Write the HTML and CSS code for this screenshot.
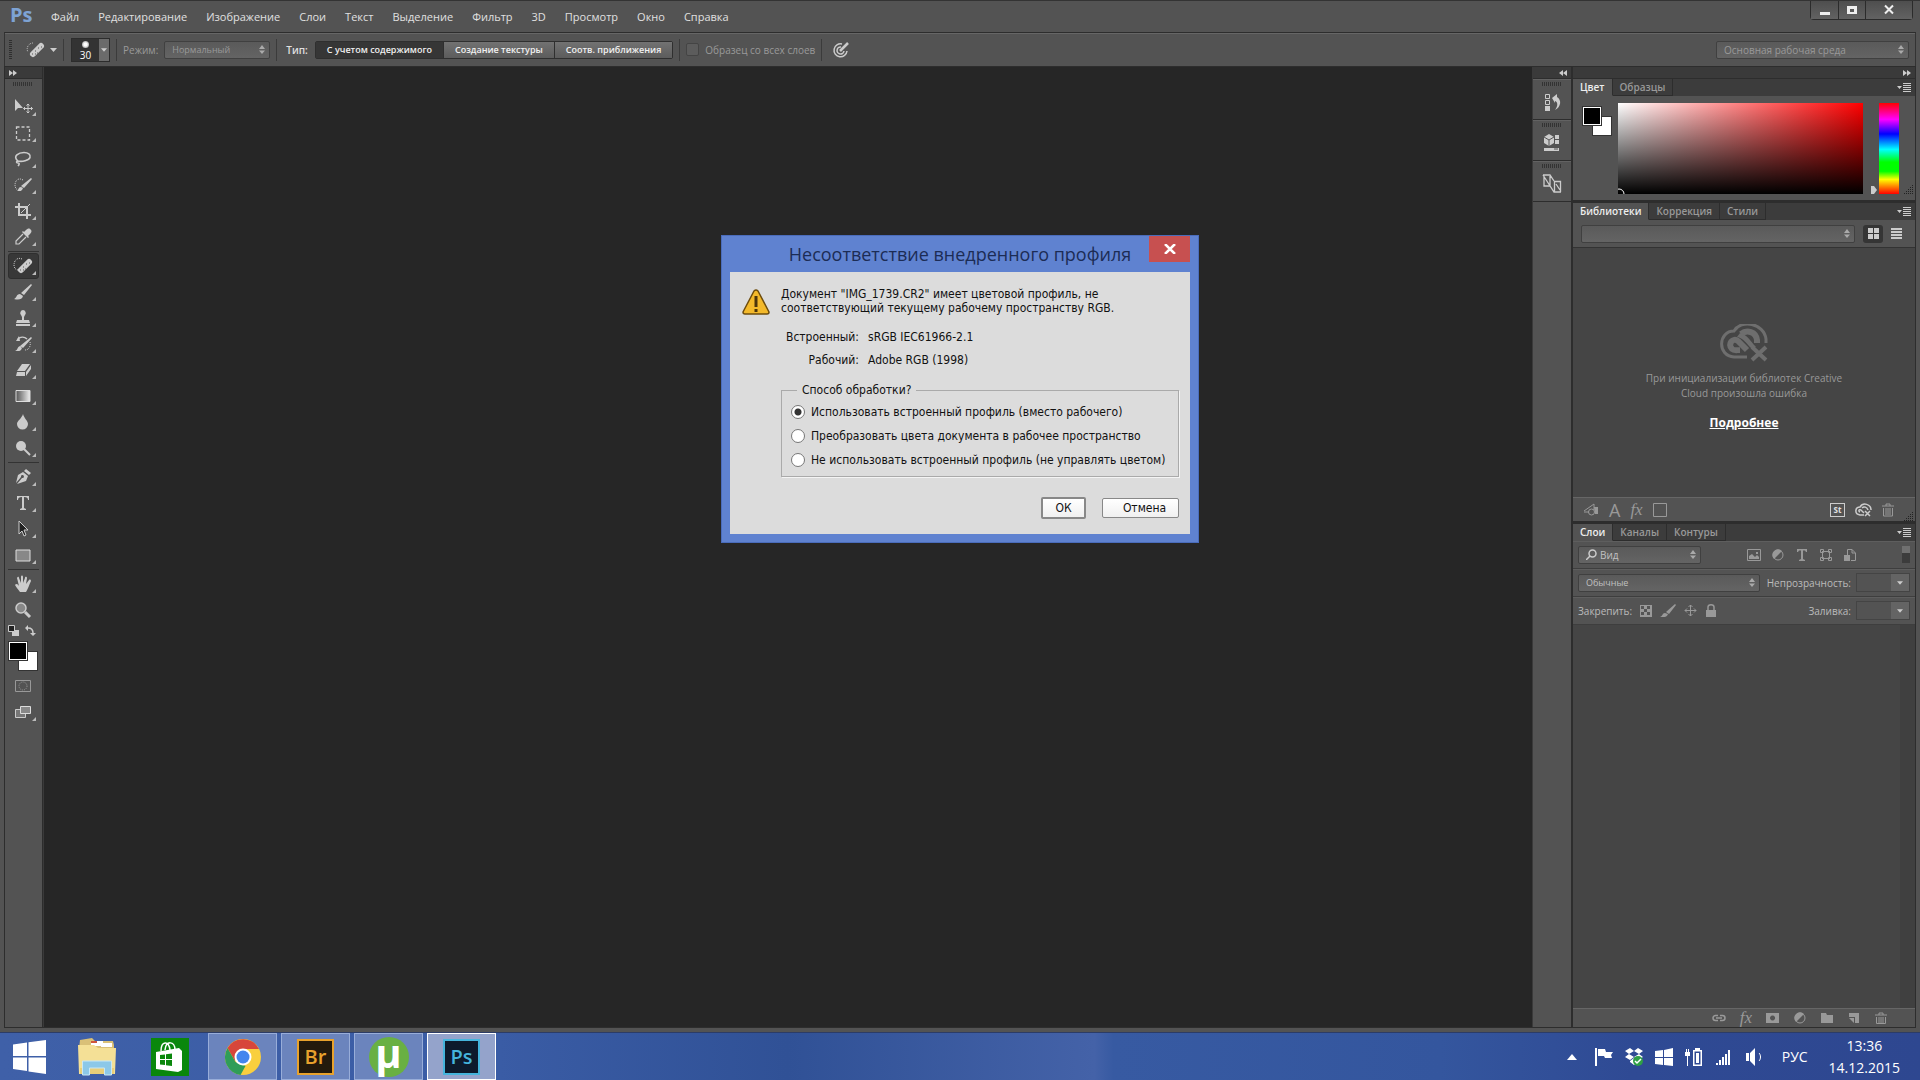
FILE: index.html
```html
<!DOCTYPE html>
<html lang="ru">

<head>
  <meta charset="UTF-8">
  <meta name="viewport" content="width=device-width, initial-scale=1.0">
  <title>Photoshop</title>
  <link rel="stylesheet" href="styles.css">
</head>

<body>
  <div class="app">
    <header class="menubar">
      <span class="logo">Ps</span>
      <nav class="menu">
        <a href="#">Файл</a>
        <a href="#">Редактирование</a>
        <a href="#">Изображение</a>
        <a href="#">Слои</a>
        <a href="#">Текст</a>
        <a href="#">Выделение</a>
        <a href="#">Фильтр</a>
        <a href="#">3D</a>
        <a href="#">Просмотр</a>
        <a href="#">Окно</a>
        <a href="#">Справка</a>
      </nav>
      <div class="window-buttons">
        <button type="button" aria-label="Свернуть"><svg width="12" height="12" viewBox="0 0 12 12"><path d="M1 8h10v3H1z"/></svg></button>
        <button type="button" aria-label="Развернуть"><svg width="12" height="12" viewBox="0 0 12 12"><path fill-rule="evenodd" d="M1 2h10v8H1zM4 5v3h4V5z"/></svg></button>
        <button type="button" class="wide" aria-label="Закрыть"><svg width="12" height="12" viewBox="0 0 12 12"><path class="line" stroke-width="2" d="M2 1.500l8 8M10 1.500l-8 8"/></svg></button>
      </div>
    </header>

    <div class="options">
      <span class="grip-v"></span>
      <button type="button" class="tool-preset" aria-label="Точечная восстанавливающая кисть">
        <svg width="22" height="20" viewBox="0 0 22 20"><path class="line dots" d="M9 3a6 6 0 0 0-5 9"/><path class="line" stroke-width="6" stroke-linecap="round" d="M9 14l8-8"/><path class="holes" d="M8 14h1M11 11h1M13 13h1M14 8h1M17 7h1M11 14h1"/></svg>
        <svg width="7" height="4" viewBox="0 0 7 4"><path d="M0 0h7L3.500 4z"/></svg>
      </button>
      <span class="divider"></span>
      <button type="button" class="brush-size">
        <span class="brush-preview"><span class="brush-dot"></span>30</span>
        <span class="brush-arrow"><svg width="6" height="4" viewBox="0 0 7 4"><path d="M0 0h7L3.500 4z"/></svg></span>
      </button>
      <span class="divider"></span>
      <label for="mode" class="dim">Режим:</label>
      <span class="select mode">
        <select id="mode" class="dim"><option>Нормальный</option></select>
        <svg width="6" height="9" viewBox="0 0 6 9"><path d="M0 4l3-4 3 4zM0 5.500h6L3 9z"/></svg>
      </span>
      <span class="divider"></span>
      <span class="type-label">Тип:</span>
      <div class="segmented">
        <button type="button" class="active">С учетом содержимого</button>
        <button type="button">Создание текстуры</button>
        <button type="button">Соотв. приближения</button>
      </div>
      <span class="divider"></span>
      <label class="check dim"><input type="checkbox" disabled>Образец со всех слоев</label>
      <span class="divider"></span>
      <button type="button" class="plain pressure" aria-label="Нажим пера">
        <svg width="18" height="18" viewBox="0 0 18 18"><path class="line" stroke-width="1.500" d="M10 3a6.500 6.500 0 1 0 5 7M9 6a3.500 3.500 0 1 0 3 4"/><path class="line" stroke-width="2.500" d="M8 10l8-8"/></svg>
      </button>
      <span class="select workspace">
        <select class="dim" aria-label="Рабочая среда"><option>Основная рабочая среда</option></select>
        <svg width="6" height="9" viewBox="0 0 6 9"><path d="M0 4l3-4 3 4zM0 5.500h6L3 9z"/></svg>
      </span>
    </div>

    <main class="work">
      <aside class="toolbox">
        <div class="dock-head"><svg width="8" height="6" viewBox="0 0 8 6"><path d="M0 0l4 3-4 3zM4 0l4 3-4 3z"/></svg></div>
        <span class="grip-h"></span>
        <button type="button" class="tool" aria-label="Перемещение"><svg class="icon" viewBox="0 0 20 20"><path d="M2 2v12l3-3h5z"/><path class="line" d="M15 7v9M10.500 11.500h9M13.500 8.500L15 7l1.500 1.500M13.500 14.500L15 16l1.500-1.500M12 10l-1.500 1.500L12 13M18 10l1.500 1.500L18 13"/></svg></button>
        <button type="button" class="tool" aria-label="Прямоугольная область"><svg class="icon" viewBox="0 0 20 20"><path class="line" stroke-width="1.300" stroke-dasharray="3 2" d="M3.500 4h13v13h-13z"/></svg></button>
        <button type="button" class="tool" aria-label="Лассо"><svg class="icon" viewBox="0 0 20 20"><path class="line" stroke-width="1.600" d="M5 12C-1 7 6 3.500 11 3.500c4 0 7 2 6 5S9 13 5 12c-2 0-2 2 0 2s1 2 0 3"/></svg></button>
        <button type="button" class="tool" aria-label="Быстрое выделение"><svg class="icon" viewBox="0 0 20 20"><path class="line dots" d="M10 5C5 2 2 6 2 10s3 6 6 5"/><path d="M18 3l1 1-8 9-3-2zM10 13c-1 4-4 3-6 3 2-1 1-4 4-4z"/></svg></button>
        <button type="button" class="tool" aria-label="Рамка"><svg class="icon" viewBox="0 0 20 20"><path class="line" stroke-width="2" d="M6 2v12h12M2 6h12v12"/><path class="line" d="M8 12l9-9"/></svg></button>
        <button type="button" class="tool" aria-label="Пипетка"><svg class="icon" viewBox="0 0 20 20"><path d="M17 2c2 1 2 3 0 5l-2 2 1 1-1 1-6-6 1-1 1 1 2-2c1-1 3-2 4-1z"/><path class="line" stroke-width="1.200" d="M10 7l-7 7v3h3l7-7"/></svg></button>
        <span class="tool-line"></span>
        <button type="button" class="tool active" aria-label="Точечная восстанавливающая кисть"><svg class="icon" viewBox="0 0 20 20"><path class="line dots" d="M9 3C5 1 1 4 1 9c0 3 2 5 4 5"/><path class="line" stroke-width="6" stroke-linecap="round" d="M8 14l8-8"/><path class="holes" d="M7 14h1M10 11h1M12 13h1M13 8h1M16 7h1M10 14h1"/></svg></button>
        <button type="button" class="tool" aria-label="Кисть"><svg class="icon" viewBox="0 0 20 20"><path d="M18 2l1 1-8 10-3-2zM10 14c-1 4-5 4-9 3 3-1 2-5 6-5z"/></svg></button>
        <button type="button" class="tool" aria-label="Штамп"><svg class="icon" viewBox="0 0 20 20"><path d="M10 2a3 3 0 0 1 2 5l-1 2v3h5l1 3H3l1-3h5V9L8 7a3 3 0 0 1 2-5zM3 16h14v2H3z"/></svg></button>
        <button type="button" class="tool" aria-label="Архивная кисть"><svg class="icon" viewBox="0 0 20 20"><path d="M18 3l1 1-9 10-3-2zM9 14c-1 4-4 3-7 3 3-1 2-4 5-5zM3 7l3-5 1 5z"/><path class="line" stroke-width="1.400" d="M5 5c2-2 6-3 9 0"/><path class="line dots" d="M17 8c1 4-1 8-5 8"/></svg></button>
        <button type="button" class="tool" aria-label="Ластик"><svg class="icon" viewBox="0 0 20 20"><path d="M9 4h8l-5 7H4zM4 12h8v4H3zM13 12l5-7v4l-5 7z"/></svg></button>
        <button type="button" class="tool" aria-label="Градиент"><svg class="icon" viewBox="0 0 20 20"><defs><linearGradient id="grad"><stop offset="0" stop-color="#555"/><stop offset="1" stop-color="#eee"/></linearGradient></defs><path fill="url(#grad)" stroke="#ddd" d="M3 4.500h14v11H3z"/></svg></button>
        <button type="button" class="tool" aria-label="Размытие"><svg class="icon" viewBox="0 0 20 20"><path d="M10 2c1 4 5 7 5 10a5 5 0 0 1-11 0c0-3 5-6 6-10z"/></svg></button>
        <button type="button" class="tool" aria-label="Осветлитель"><svg class="icon" viewBox="0 0 20 20"><circle cx="8" cy="8" r="5"/><path class="line" stroke-width="2" d="M11 11l6 6"/></svg></button>
        <span class="tool-line"></span>
        <button type="button" class="tool" aria-label="Перо"><svg class="icon" viewBox="0 0 20 20"><path d="M13 2l5 4-2 2-5-4zM10 5l5 4-2 5-9 3 5-6a1.500 1.500 0 1 0-1-1l-5 6L5 8z"/></svg></button>
        <button type="button" class="tool" aria-label="Текст"><svg class="icon" viewBox="0 0 20 20"><path d="M4 3h12v4h-1c0-2-1-3-4-3v11l2 1v1H7v-1l2-1V4C6 4 5 5 5 7H4z"/></svg></button>
        <button type="button" class="tool" aria-label="Выделение контура"><svg class="icon" viewBox="0 0 20 20"><path fill="#222" stroke="#ccc" d="M6 2v13l3-3 2 5 2-1-2-5h4z"/></svg></button>
        <button type="button" class="tool" aria-label="Прямоугольник"><svg class="icon" viewBox="0 0 20 20"><path fill="#888" stroke="#ddd" d="M3 5h14v11H3z"/></svg></button>
        <span class="tool-line"></span>
        <button type="button" class="tool" aria-label="Рука"><svg class="icon" viewBox="0 0 20 20"><path d="M7 18c-2-3-4-5-5-7 1-2 3-1 4 1L4 4c1-2 2-1 2 0l2 5V3c0-2 2-2 2 0v6l2-5c0-2 2-1 2 0l-1 6 3-4c1-1 2 0 2 1-2 4-3 8-5 11z"/></svg></button>
        <button type="button" class="tool no-more" aria-label="Масштаб"><svg class="icon" viewBox="0 0 20 20"><circle cx="8" cy="8" r="5" fill="#888" stroke="#ccc" stroke-width="1.500"/><path class="line" stroke-width="3" d="M12 12l5 5"/></svg></button>
        <div class="swap">
          <button type="button" class="plain" aria-label="Цвета по умолчанию"><svg width="11" height="11" viewBox="0 0 11 11"><path d="M5 5h6v6H4V7h1z"/><path fill="#222" stroke="#ccc" d="M.5.500h6v6h-6z"/></svg></button>
          <button type="button" class="plain" aria-label="Поменять цвета"><svg width="11" height="11" viewBox="0 0 11 11"><path d="M0 3l3-3v6zM5 8h6l-3 3z"/><path class="line" stroke-width="1.500" d="M3 3c3 0 5 1 5 5"/></svg></button>
        </div>
        <div class="swatches"><span class="back"></span><span class="front"></span></div>
        <button type="button" class="tool no-more" aria-label="Быстрая маска"><svg class="icon" viewBox="0 0 20 20"><path class="line faint" d="M2.500 4.500h15v11h-15z"/><circle class="line faint" stroke-dasharray="1 1" cx="10" cy="10" r="4"/></svg></button>
        <button type="button" class="tool" aria-label="Режим экрана"><svg class="icon" viewBox="0 0 20 20"><path fill="#777" stroke="#ccc" d="M2.500 7.500h10v8h-10z"/><path fill="#888" stroke="#ddd" d="M7.500 4.500h10v7h-10z"/></svg></button>
      </aside>

      <section class="canvas"></section>

      <aside class="mini-dock">
        <div class="dock-head right"><svg width="8" height="6" viewBox="0 0 8 6"><path d="M4 0L0 3l4 3zM8 0L4 3l4 3z"/></svg></div>
        <button type="button" class="dock-cell" aria-label="История"><span class="grip-h"></span><svg width="20" height="20" viewBox="0 0 20 20"><path class="line" d="M3.500 2.500h4v4h-4zM3.500 8.500h4v4h-4z"/><path d="M3 14h5v5H3zM10 6l5-4v3c5 3 4 10-2 13 3-4 3-8 0-9v2z"/></svg></button>
        <button type="button" class="dock-cell" aria-label="Свойства"><span class="grip-h"></span><svg width="20" height="20" viewBox="0 0 20 20"><path d="M7 1l5 3v6l-5 3-5-3V4zM13 2h4v4h-4zM13 7h4v4h-4zM2 15h15v3H2z"/><path class="cut" d="M2 4l5 3 5-3M7 7v6M12 16h4"/></svg></button>
        <button type="button" class="dock-cell" aria-label="Инструменты"><span class="grip-h"></span><svg width="20" height="20" viewBox="0 0 20 20"><path class="line" stroke-width="1.300" d="M1 1h7l4 6M1 1l11 17h7M2 3v9h6V2M12.500 18V7.500h6V18M14 10l4 6"/></svg></button>
      </aside>

      <aside class="panels">
        <div class="dock-head right"><svg width="8" height="6" viewBox="0 0 8 6"><path d="M0 0l4 3-4 3zM4 0l4 3-4 3z"/></svg></div>

        <section class="panel">
          <div class="tabs">
            <button type="button" class="active">Цвет</button>
            <button type="button">Образцы</button>
            <button type="button" class="panel-menu" aria-label="Меню"><svg width="14" height="9" viewBox="0 0 14 9"><path d="M0 3h5L2.500 6zM6 0h8v1H6zM6 2h8v1H6zM6 4h8v1H6zM6 6h8v1H6zM6 8h8v1H6z"/></svg></button>
          </div>
          <div class="color-body">
            <div class="swatches"><span class="back"></span><span class="front"></span></div>
            <svg class="color-field" height="91" aria-label="Поле цвета">
              <defs>
                <linearGradient id="tone"><stop offset="0" stop-color="#fff"/><stop offset="1" stop-color="#f00"/></linearGradient>
                <linearGradient id="shade" x2="0" y2="1"><stop offset="0" stop-color="#000" stop-opacity="0"/><stop offset="1" stop-color="#000"/></linearGradient>
              </defs>
              <rect width="100%" height="100%" fill="url(#tone)"/>
              <rect width="100%" height="100%" fill="url(#shade)"/>
              <circle cx="1" cy="91" r="5" fill="none" stroke="#fff"/>
            </svg>
            <svg class="hue-mark" width="6" height="8" viewBox="0 0 6 8"><path d="M0 0h3l3 4-3 4H0z"/></svg>
            <div class="hue"></div>
            <svg class="resize" width="10" height="10" viewBox="0 0 10 10"><path d="M0 9.500h10M2 7.500h8M4 5.500h6M6 3.500h4M8 1.500h2"/></svg>
          </div>
        </section>

        <section class="panel">
          <div class="tabs">
            <button type="button" class="active">Библиотеки</button>
            <button type="button">Коррекция</button>
            <button type="button">Стили</button>
            <button type="button" class="panel-menu" aria-label="Меню"><svg width="14" height="9" viewBox="0 0 14 9"><path d="M0 3h5L2.500 6zM6 0h8v1H6zM6 2h8v1H6zM6 4h8v1H6zM6 6h8v1H6zM6 8h8v1H6z"/></svg></button>
          </div>
          <div class="lib-bar">
            <span class="select grow">
              <select aria-label="Библиотека"><option></option></select>
              <svg width="6" height="9" viewBox="0 0 6 9"><path d="M0 4l3-4 3 4zM0 5.500h6L3 9z"/></svg>
            </span>
            <button type="button" class="view active" aria-label="Сетка"><svg width="11" height="11" viewBox="0 0 11 11"><path d="M0 0h5v5H0zM6 0h5v5H6zM0 6h5v5H0zM6 6h5v5H6z"/></svg></button>
            <button type="button" class="view" aria-label="Список"><svg width="11" height="11" viewBox="0 0 11 11"><path d="M0 0h11v2H0zM0 3h11v2H0zM0 6h11v2H0zM0 9h11v2H0z"/></svg></button>
          </div>
          <div class="lib-body">
            <svg width="48" height="38" viewBox="0 0 48 38"><path d="M27 33H14C-3 32-2 7 14 7 21-5 44-1 46 15v4" fill="none" stroke="#6e6e6e" stroke-width="3"/><path d="M27 26l-9-9c-5-4-11 3-6 8 2 2 5 1 8 1M21 10c6-5 15-2 16 6v3" fill="none" stroke="#6e6e6e" stroke-width="6"/><path d="M20 9c8 2 10 8 16 14l-5 1c-5-5-8-10-14-11z" fill="#6e6e6e"/><path d="M32 23l14 13M46 23L32 36" fill="none" stroke="#6e6e6e" stroke-width="4"/></svg>
            <p>При инициализации библиотек Creative Cloud произошла ошибка</p>
            <a href="#">Подробнее</a>
          </div>
          <div class="lib-foot">
            <button type="button" class="plain" aria-label="Графика"><svg width="16" height="14" viewBox="0 0 16 14"><path class="line faint" d="M1 8l10-7v6M1 9h5"/><circle class="line faint" cx="8.500" cy="9" r="3"/><path class="gray" d="M11 4h4v7h-3z"/></svg></button>
            <button type="button" class="plain big-a">A</button>
            <button type="button" class="plain fx">fx</button>
            <button type="button" class="plain" aria-label="Цвет"><svg width="14" height="14" viewBox="0 0 14 14"><path class="line faint" d="M.5.500h13v13H.5z"/></svg></button>
            <span class="spring"></span>
            <button type="button" class="stock">St</button>
            <button type="button" class="plain" aria-label="Creative Cloud"><svg width="17" height="14" viewBox="0 0 17 14"><path class="line" stroke-width="1.500" d="M9 12H5C-1 11 0 4 5 4c3-5 11-3 11 3M5 9c-2-1-1-3 1-2l3 3M7 5c2-2 5-1 6 2"/><path class="line" stroke-width="1.500" d="M10 8l5 5M15 8l-5 5"/></svg></button>
            <button type="button" class="plain" aria-label="Удалить"><svg width="12" height="14" viewBox="0 0 12 14"><path class="line faint" d="M0 3h12M4 3V1h4v2M1.500 5v8h9V5M4 5v7M6 5v7M8 5v7"/></svg></button>
            <svg class="resize" width="10" height="10" viewBox="0 0 10 10"><path d="M0 9.500h10M2 7.500h8M4 5.500h6M6 3.500h4M8 1.500h2"/></svg>
          </div>
        </section>

        <section class="panel layers">
          <div class="tabs">
            <button type="button" class="active">Слои</button>
            <button type="button">Каналы</button>
            <button type="button">Контуры</button>
            <button type="button" class="panel-menu" aria-label="Меню"><svg width="14" height="9" viewBox="0 0 14 9"><path d="M0 3h5L2.500 6zM6 0h8v1H6zM6 2h8v1H6zM6 4h8v1H6zM6 6h8v1H6zM6 8h8v1H6z"/></svg></button>
          </div>
          <div class="layer-row">
            <span class="select kind">
              <svg class="search" width="11" height="11" viewBox="0 0 11 11"><circle class="line" stroke-width="1.500" cx="6.500" cy="4.500" r="3.500"/><path class="line" stroke-width="1.500" d="M4 7l-4 4"/></svg>
              <select aria-label="Тип фильтра"><option>Вид</option></select>
              <svg width="6" height="9" viewBox="0 0 6 9"><path d="M0 4l3-4 3 4zM0 5.500h6L3 9z"/></svg>
            </span>
            <div class="filters">
              <button type="button" class="plain" aria-label="Пиксели"><svg width="14" height="12" viewBox="0 0 14 12"><path class="line faint" d="M.5.500h13v11H.5z"/><path class="gray" d="M2 10V7l3-2 3 3 2-2 2 2v2zM9 3h2v2H9z"/></svg></button>
              <button type="button" class="plain" aria-label="Коррекция"><svg width="14" height="12" viewBox="0 0 14 12"><circle class="line faint" cx="7" cy="6" r="5"/><path class="gray" d="M3 10A5.500 5.500 0 0 1 11 2z"/></svg></button>
              <button type="button" class="plain" aria-label="Текст"><svg width="14" height="12" viewBox="0 0 14 12"><path class="gray" d="M2 0h10v3h-1L10 1.500H8V10l2 1v1H4v-1l2-1V1.500H4L3 3H2z"/></svg></button>
              <button type="button" class="plain" aria-label="Фигура"><svg width="14" height="12" viewBox="0 0 14 12"><path class="line faint" d="M3.500 2v8M10.500 2v8M4 2.500h6M4 9.500h6M1.500.500h3v3h-3zM9.500.500h3v3h-3zM1.500 8.500h3v3h-3zM9.500 8.500h3v3h-3z"/></svg></button>
              <button type="button" class="plain" aria-label="Смарт-объект"><svg width="14" height="12" viewBox="0 0 14 12"><path class="line faint" d="M4.500 6V.5H9L12.500 4v7.500H8M9 .5V4h3"/><path class="gray" d="M1 6h6v6H1z"/></svg></button>
            </div>
            <button type="button" class="filter-switch" aria-label="Фильтрация"></button>
          </div>
          <div class="layer-row">
            <span class="select blend">
              <select aria-label="Режим наложения"><option>Обычные</option></select>
              <svg width="6" height="9" viewBox="0 0 6 9"><path d="M0 4l3-4 3 4zM0 5.500h6L3 9z"/></svg>
            </span>
            <label for="opacity">Непрозрачность:</label>
            <span class="amount"><input type="text" id="opacity"><button type="button" aria-label="Выбрать"><svg width="6" height="4" viewBox="0 0 7 4"><path d="M0 0h7L3.500 4z"/></svg></button></span>
          </div>
          <div class="layer-row">
            <span>Закрепить:</span>
            <div class="locks">
              <button type="button" class="plain" aria-label="Прозрачность"><svg width="12" height="12" viewBox="0 0 12 12"><path class="gray" d="M0 0h12v12H0z"/><path fill="#555" d="M1 1h3v3H1zM7 1h3v3H7zM4 4h3v3H4zM1 7h3v3H1zM7 7h3v3H7z"/></svg></button>
              <button type="button" class="plain" aria-label="Пиксели"><svg width="16" height="14" viewBox="0 0 16 14"><path class="gray" d="M15 0l1 1-7 9-3-2zM8 10c-1 4-5 3-8 3 3-1 2-4 5-4z"/></svg></button>
              <button type="button" class="plain" aria-label="Положение"><svg width="13" height="13" viewBox="0 0 13 13"><path class="line faint" d="M6.500 1v11M1 6.500h11M4.500 3l2-2 2 2M4.500 10l2 2 2-2M3 4.500l-2 2 2 2M10 4.500l2 2-2 2"/></svg></button>
              <button type="button" class="plain" aria-label="Закрепить все"><svg width="12" height="13" viewBox="0 0 12 13"><path class="gray" d="M1 6h10v7H1z"/><path class="line faint" stroke-width="1.500" d="M3 6V3c0-3 6-3 6 0v3"/></svg></button>
            </div>
            <span class="spring"></span>
            <label for="fill">Заливка:</label>
            <span class="amount"><input type="text" id="fill"><button type="button" aria-label="Выбрать"><svg width="6" height="4" viewBox="0 0 7 4"><path d="M0 0h7L3.500 4z"/></svg></button></span>
          </div>
          <div class="layer-list"></div>
          <div class="layer-foot">
            <button type="button" class="plain" aria-label="Связать слои"><svg width="14" height="12" viewBox="0 0 14 12"><path class="line faint" stroke-width="1.500" d="M6 3.500H3.500a2.500 2.500 0 0 0 0 5H6M8 3.500h2.500a2.500 2.500 0 0 1 0 5H8M4 6h6"/></svg></button>
            <button type="button" class="plain fx">fx</button>
            <button type="button" class="plain" aria-label="Маска"><svg width="14" height="12" viewBox="0 0 14 12"><path class="gray" fill-rule="evenodd" d="M0 1h13v10H0zM6.500 3.500a2.500 2.500 0 1 0 .1 0z"/></svg></button>
            <button type="button" class="plain" aria-label="Корректирующий слой"><svg width="14" height="12" viewBox="0 0 14 12"><circle class="line faint" cx="7" cy="6" r="5"/><path class="gray" d="M3 10A5.500 5.500 0 0 1 11 2z"/></svg></button>
            <button type="button" class="plain" aria-label="Группа"><svg width="14" height="12" viewBox="0 0 14 12"><path class="gray" d="M1 1h5l1 2h6v8H1z"/></svg></button>
            <button type="button" class="plain" aria-label="Новый слой"><svg width="14" height="12" viewBox="0 0 14 12"><path class="gray" d="M2 1h10v10H8V5H2zM2 6h5v5z"/></svg></button>
            <button type="button" class="plain" aria-label="Удалить"><svg width="14" height="12" viewBox="0 0 14 12"><path class="line faint" d="M1 3h12M5 3V1h4v2M2.500 5v6.500h9V5M5 5v6M7 5v6M9 5v6"/></svg></button>
          </div>
        </section>
      </aside>
    </main>
  </div>

  <footer class="taskbar">
    <button type="button" class="start" aria-label="Пуск"><svg width="33" height="34" viewBox="0 0 33 34"><path fill="#fff" d="M0 4.500l14-2V16H0zM15.500 2.300L33 0v16H15.500zM0 17.500h14V31l-14-2zM15.500 17.500H33V34l-17.500-2.500z"/></svg></button>
    <button type="button" class="task" aria-label="Проводник"><svg width="40" height="38" viewBox="0 0 40 38"><path fill="#d9c077" d="M3 2l12-2 3 3h18l1 4v4H2z"/><path fill="#fff" d="M14 3h12v5H14zM24 5h11v4H24z"/><path fill="#d0563c" d="M14 3h6v2h-6z"/><path fill="#f4e096" d="M1 7h16l4 3h18l-1 26H2z"/><path fill="#e9cf79" d="M3 30h34v6H3z"/><path fill="#8cc8e8" stroke="#c9e8f5" d="M5.500 23h29v14h-7V30h-15v7h-7z"/></svg></button>
    <button type="button" class="task" aria-label="Магазин"><svg width="38" height="38" viewBox="0 0 38 38"><path fill="#0a870c" d="M0 0h38v38H0z"/><path fill="none" stroke="#fff" stroke-width="1.500" d="M10 13c0-10 8-11 9-1M14 12c1-10 10-9 10 0"/><path fill="#fff" d="M5 14l23-4 3 3v19l-4 2-22-3z"/><path fill="#0a870c" d="M9 17l5-.5V21H9zM15 16.300l6-.8V21h-6zM9 22h5v5l-5-.5zM15 22h6v6l-6-.8z"/></svg></button>
    <button type="button" class="task running" aria-label="Chrome"><svg width="36" height="36" viewBox="0 0 36 36"><circle cx="18" cy="18" r="18" fill="#f9cf3e"/><path fill="#d7463b" d="M2.500 9A18 18 0 0 1 34 10H18l-8 12z"/><path fill="#2f9d58" d="M2.500 9l8 14 10 4-5 9A18 18 0 0 1 2.500 9z"/><circle cx="18" cy="18" r="8.500" fill="#fff"/><circle cx="18" cy="18" r="6.500" fill="#4486ee"/></svg></button>
    <button type="button" class="task running"><span class="adobe bridge">Br</span></button>
    <button type="button" class="task running" aria-label="uTorrent"><span class="torrent">µ</span></button>
    <button type="button" class="task running front-task"><span class="adobe photoshop">Ps</span></button>

    <div class="tray">
      <button type="button" class="plain more" aria-label="Значки"><svg width="10" height="6" viewBox="0 0 10 6"><path d="M0 6l5-6 5 6z"/></svg></button>
      <button type="button" class="plain" aria-label="Центр поддержки"><svg width="20" height="20" viewBox="0 0 20 20"><path d="M1 1h2v18H1zM4 2h7l1 3h7l-2 3 1 3h-7l-1-2H4z"/></svg></button>
      <button type="button" class="plain" aria-label="Dropbox"><svg width="20" height="20" viewBox="0 0 20 20"><path d="M1 4l5-3 4 3-5 3zM10 4l4-3 5 3-4 3zM1 10l4-3 5 3-4 3zM10 10l5-3 4 3-5 3zM6 14l4-3 4 3v1l-4 3-4-3z"/><circle cx="14" cy="14" r="5" fill="#2f9f45"/><path class="line" stroke-width="1.500" d="M11 14l2 2 4-4"/></svg></button>
      <button type="button" class="plain" aria-label="Windows"><svg width="20" height="20" viewBox="0 0 20 20"><path d="M1 4l8-1v7H1zM10 3l9-2v9h-9zM1 11h8v7l-8-1zM10 11h9v8l-9-1z"/></svg></button>
      <button type="button" class="plain" aria-label="Батарея"><svg width="20" height="20" viewBox="0 0 20 20"><path fill-rule="evenodd" d="M11 1h5v2h2v16H9V3h2zM10.500 4.500v13h6v-13z"/><path d="M12 6h3v10h-3zM2 2h1v3h1V2h1v3h1v4H4v10H3V9H1V5h1z"/></svg></button>
      <button type="button" class="plain" aria-label="Сеть"><svg width="20" height="20" viewBox="0 0 20 20"><path d="M2 16h2v2H2zM5 13h2v5H5zM8 10h2v8H8zM11 7h2v11h-2zM14 3h2v15h-2z"/></svg></button>
      <button type="button" class="plain" aria-label="Громкость"><svg width="20" height="20" viewBox="0 0 20 20"><path d="M2 6h3v8H2zM6 6l5-5v18l-5-5z"/><path class="line" d="M15 6c2 2 2 6 0 8"/></svg></button>
      <button type="button" class="plain lang">РУС</button>
      <button type="button" class="plain clock"><span>13:36</span><span>14.12.2015</span></button>
    </div>
  </footer>

  <div class="overlay">
    <form class="dialog">
      <div class="dialog-title">
        <h1>Несоответствие внедренного профиля</h1>
        <button type="button" class="dialog-close" aria-label="Закрыть"><svg width="12" height="10" viewBox="0 0 12 10"><path class="line" stroke-width="2.500" d="M1 0l10 10M11 0L1 10"/></svg></button>
      </div>
      <div class="dialog-body">
        <svg class="warning" width="28" height="27" viewBox="0 0 28 27"><path fill="#f3b92b" stroke="#6d4c0c" stroke-width="1.500" stroke-linejoin="round" d="M12 2q2-2 4 0l11 21q0 2-2 2H3q-2 0-2-2z"/><path fill="#4c340b" d="M12.500 7h3v11h-3zM12.500 20h3v3h-3z"/></svg>
        <div class="dialog-content">
          <p>Документ "IMG_1739.CR2" имеет цветовой профиль, не соответствующий текущему рабочему пространству RGB.</p>
          <dl>
            <dt>Встроенный:</dt>
            <dd>sRGB IEC61966-2.1</dd>
            <dt>Рабочий:</dt>
            <dd>Adobe RGB (1998)</dd>
          </dl>
          <fieldset>
            <legend>Способ обработки?</legend>
            <label><input type="radio" name="profile" checked>Использовать встроенный профиль (вместо рабочего)</label>
            <label><input type="radio" name="profile">Преобразовать цвета документа в рабочее пространство</label>
            <label><input type="radio" name="profile">Не использовать встроенный профиль (не управлять цветом)</label>
          </fieldset>
          <div class="dialog-buttons">
            <button type="button" class="default">ОК</button>
            <button type="button" class="cancel">Отмена</button>
          </div>
        </div>
      </div>
    </form>
  </div>
</body>

</html>
```
FILE: styles.css
```css
* {
  box-sizing: border-box;
}

body {
  margin: 0;
  height: 100vh;
  display: flex;
  flex-direction: column;
  background-color: #535353;
  color: #e0e0e0;
  font-family: 'Open Sans', 'Noto Sans', sans-serif;
  font-size: 10px;
  overflow: hidden;
}

button, select, input {
  font: inherit;
  color: inherit;
  margin: 0;
  padding: 0;
  border: 0;
  background: none;
}

button {
  display: flex;
  align-items: center;
  justify-content: center;
}

a {
  color: inherit;
  text-decoration: none;
}

svg {
  display: block;
  flex: none;
  fill: #ccc;
}

.line {
  fill: none;
  stroke: #ccc;
}

.faint {
  stroke: #999;
}

.gray {
  fill: #999;
}

.dots {
  stroke-dasharray: 1 1;
}

.holes, .cut {
  fill: none;
  stroke: #555;
}

.dim {
  color: #999;
}

.spring {
  flex: 1;
}

/* window frame */
.app {
  flex: 1;
  min-height: 0;
  display: flex;
  flex-direction: column;
  padding: 0 4px 4px;
  border-top: 1px solid #333;
}

.menubar {
  display: flex;
  height: 31px;
  flex: none;
}

.logo {
  width: 47px;
  padding-left: 6px;
  color: #7ea3d4;
  font-size: 20px;
  font-weight: 700;
  line-height: 28px;
}

.menu {
  display: flex;
  gap: 19px;
  font-size: 11px;
  line-height: 32px;
}

.window-buttons {
  display: flex;
  align-self: flex-start;
  margin: 0 3px 0 auto;
  border: 1px solid #2b2b2b;
  border-top: 0;
  border-radius: 0 0 4px 4px;
}

.window-buttons button {
  width: 27px;
  height: 18px;
  background: linear-gradient(#4e4e4e, #626262);
}

.window-buttons button + button {
  border-left: 1px solid #2b2b2b;
}

.window-buttons .wide {
  width: 47px;
}

.window-buttons svg {
  fill: #eee;
}

.window-buttons .line {
  stroke: #eee;
}

/* options bar */
.options {
  display: flex;
  align-items: center;
  gap: 6px;
  height: 34px;
  flex: none;
  padding: 0 8px 0 4px;
  border: 1px solid #333;
  border-top-color: #2d2d2d;
  border-bottom: 0;
  box-shadow: inset 0 1px #666;
}

.grip-v {
  width: 3px;
  height: 20px;
  margin-right: 6px;
  background: repeating-linear-gradient(#2f2f2f 0 1px, #535353 1px 2px);
}

.divider {
  width: 1px;
  height: 22px;
  background-color: #3b3b3b;
}

.tool-preset {
  gap: 4px;
}

.brush-size {
  height: 24px;
  margin-left: 1px;
  border: 1px solid #2c2c2c;
}

.brush-preview {
  display: flex;
  flex-direction: column;
  align-items: center;
  justify-content: space-between;
  width: 27px;
  height: 22px;
  padding-top: 2px;
  background-color: #333;
  color: #fff;
  line-height: 12px;
}

.brush-dot {
  width: 7px;
  height: 7px;
  border-radius: 50%;
  background: radial-gradient(#fff 30%, #777);
}

.brush-arrow {
  display: flex;
  align-items: center;
  justify-content: center;
  width: 10px;
  height: 22px;
  background-color: #6b6b6b;
}

.select {
  display: grid;
  align-items: center;
  height: 18px;
  background: linear-gradient(#5a5a5a, #646464);
  border: 1px solid #404040;
  border-radius: 2px;
  color: #c0c0c0;
}

.select select,
.select svg {
  grid-area: 1 / 1;
}

.select select {
  appearance: none;
  width: 100%;
  height: 16px;
  padding-left: 7px;
}

.select svg {
  justify-self: end;
  margin-right: 4px;
  fill: #aaa;
  pointer-events: none;
}

.select .search {
  justify-self: start;
  margin-left: 7px;
}

.select.grow {
  flex: 1;
}

.select.mode {
  width: 106px;
  font-size: 9px;
}

.select.workspace {
  width: 193px;
  margin-left: auto;
  margin-right: -2px;
}

.type-label {
  padding: 0 1px 0 3px;
  font-weight: 600;
}

.segmented {
  display: flex;
  border: 1px solid #2f2f2f;
  border-radius: 2px;
}

.segmented button {
  height: 16px;
  padding: 0 11px;
  background: linear-gradient(#727272, #5c5c5c);
  color: #f0f0f0;
  font-size: 9px;
  font-weight: 600;
}

.segmented button + button {
  border-left: 1px solid #2f2f2f;
}

.segmented .active {
  background: #363636;
}

.check {
  display: flex;
  align-items: center;
  gap: 6px;
}

.check input {
  appearance: none;
  width: 13px;
  height: 13px;
  background-color: #5c5c5c;
  border: 1px solid #444;
  border-radius: 2px;
}

.pressure {
  margin-left: 4px;
}

/* work area */
.work {
  flex: 1;
  min-height: 0;
  display: flex;
  border: 1px solid #2d2d2d;
}

.dock-head {
  height: 12px;
  flex: none;
  display: flex;
  align-items: center;
  padding: 0 4px;
  background-color: #3a3a3a;
  border-bottom: 1px solid #2d2d2d;
}

.dock-head.right {
  justify-content: flex-end;
}

.grip-h {
  display: block;
  width: 20px;
  height: 4px;
  background: repeating-linear-gradient(90deg, #333 0 1px, #535353 1px 2px);
}

.toolbox {
  display: flex;
  flex-direction: column;
  width: 38px;
  border-right: 1px solid #2d2d2d;
}

.toolbox .grip-h {
  margin: 3px 0 8px 8px;
}

.tool {
  position: relative;
  height: 26px;
  flex: none;
  margin: 0 3px;
  border: 1px solid transparent;
  border-radius: 3px;
}

.tool.active {
  background-color: #383838;
  border-color: #2f2f2f;
}

/* corner mark of a tool that has more tools behind it */
.tool::after {
  content: '';
  position: absolute;
  right: 2px;
  bottom: 3px;
  border-left: 4px solid transparent;
  border-bottom: 4px solid #bbb;
}

.tool.no-more::after {
  display: none;
}

.icon {
  width: 20px;
  height: 20px;
  margin-right: 1px;
}

.tool-line {
  height: 1px;
  margin: 1px 3px;
  background-color: #333;
}

.swap {
  display: flex;
  justify-content: space-between;
  margin: 2px 6px 5px 3px;
}

.swatches {
  position: relative;
  width: 30px;
  height: 30px;
  flex: none;
}

.toolbox .swatches {
  margin: 0 0 2px 3px;
}

.swatches span {
  position: absolute;
  width: 20px;
  height: 20px;
  border: 1px solid #333;
}

.swatches .front {
  left: 0;
  top: 0;
  background-color: #000;
  box-shadow: inset 0 0 0 1px #fff;
}

.swatches .back {
  right: 0;
  bottom: 0;
  background-color: #fff;
}

.canvas {
  flex: 1;
  background-color: #262626;
  border-left: 1px solid #3a3a3a;
  border-right: 1px solid #3a3a3a;
}

.mini-dock {
  width: 40px;
  border-right: 2px solid #2d2d2d;
}

.dock-cell {
  width: 100%;
  height: 41px;
  flex-direction: column;
  justify-content: flex-start;
  gap: 6px;
  padding-top: 3px;
  border-bottom: 1px solid #2d2d2d;
  box-shadow: inset 0 1px #626262;
}

/* panels */
.panels {
  width: 342px;
  display: flex;
  flex-direction: column;
}

.panel {
  border-bottom: 3px solid #2d2d2d;
}

.panel.layers {
  flex: 1;
  min-height: 0;
  display: flex;
  flex-direction: column;
  border-bottom: 0;
}

.tabs {
  display: flex;
  height: 17px;
  flex: none;
  background-color: #3c3c3c;
  color: #999;
  font-weight: 600;
}

.tabs button {
  padding: 0 7px;
  border-right: 1px solid #2d2d2d;
  border-bottom: 1px solid #2d2d2d;
}

.tabs .active {
  background-color: #535353;
  color: #eee;
  border-bottom-color: #535353;
}

.tabs .panel-menu {
  margin-left: auto;
  padding: 0 4px;
  border-right: 0;
  border-bottom: 0;
}

.color-body {
  display: flex;
  height: 104px;
  padding: 7px 1px 6px 9px;
}

.color-body .swatches {
  margin: 3px 6px 0 0;
}

.color-field {
  flex: 1;
  width: 0;
}

.hue-mark {
  align-self: flex-end;
  margin: 0 2px 0 8px;
}

.hue {
  width: 20px;
  height: 91px;
  background: linear-gradient(#f00, #f0f 18%, #00f 34%, #0ff 51%, #0f0 65%, #0f0 75%, #ff0 84%, #f00);
}

.resize {
  align-self: flex-end;
  margin-left: 5px;
  stroke: #222;
  stroke-dasharray: 1 1;
}

.lib-bar {
  display: flex;
  align-items: center;
  gap: 3px;
  height: 28px;
  padding: 0 9px 0 8px;
  border-bottom: 1px solid #333;
}

.lib-bar .select {
  margin-right: 5px;
}

.view {
  width: 20px;
  height: 18px;
  border-radius: 3px;
}

.view.active {
  background-color: #353535;
}

.lib-body {
  display: flex;
  flex-direction: column;
  align-items: center;
  height: 249px;
  padding-top: 76px;
  background-color: #454545;
  color: #999;
  font-size: 10px;
  line-height: 15px;
  text-align: center;
}

.lib-body p {
  width: 210px;
  margin: 9px 0 13px;
}

.lib-body a {
  color: #fff;
  font-size: 12px;
  font-weight: 700;
  line-height: 18px;
  text-decoration: underline;
}

.lib-foot {
  display: flex;
  align-items: center;
  gap: 10px;
  height: 24px;
  padding: 0 1px 0 10px;
  border-top: 1px solid #666;
}

.lib-foot .resize {
  margin-left: 0;
}

.big-a {
  color: #999;
  font-size: 18px;
  line-height: 20px;
}

.fx {
  color: #999;
  font-family: 'Liberation Serif', serif;
  font-size: 17px;
  font-style: italic;
  line-height: 16px;
}

.stock {
  width: 15px;
  height: 14px;
  border: 1px solid #ccc;
  font-size: 8px;
  font-weight: 700;
}

.layer-row {
  display: flex;
  align-items: center;
  height: 28px;
  flex: none;
  padding: 0 5px;
  border-bottom: 1px solid #3e3e3e;
  box-shadow: inset 0 1px #5e5e5e;
  color: #bbb;
}

.select.kind {
  width: 123px;
}

.kind select {
  padding-left: 21px;
}

.select.blend {
  flex: 1;
  margin-right: 7px;
  font-size: 9px;
}

.filters {
  display: flex;
  gap: 10px;
  margin: 0 auto;
}

.filter-switch {
  width: 8px;
  height: 17px;
  background: linear-gradient(#707070 40%, #3c3c3c 40%);
}

.amount {
  display: flex;
  margin-left: 5px;
  border: 1px solid #444;
}

.amount input {
  width: 34px;
  height: 17px;
}

.amount button {
  width: 18px;
  background-color: #646464;
}

.locks {
  display: flex;
  align-items: center;
  gap: 8px;
  margin-left: 8px;
}

.layer-list {
  flex: 1;
  background-color: #454545;
  border-right: 15px solid #404040;
}

.layer-foot {
  display: flex;
  align-items: center;
  justify-content: flex-end;
  gap: 13px;
  height: 19px;
  flex: none;
  padding-right: 27px;
  border-top: 1px solid #666;
}

.layer-foot button {
  width: 14px;
}

/* taskbar */
.taskbar {
  display: flex;
  gap: 4px;
  height: 48px;
  flex: none;
  border-top: 1px solid #2c3c66;
  background: linear-gradient(90deg, #3f60a8, #3a5ca5 26%, #305196 41%, #4462a8 57%, #375aa2 58%, #34569e 75%, #2f4a94 85%, #2e4790);
}

.start {
  width: 58px;
}

.task {
  width: 69px;
}

.running {
  background-color: #6b84bd;
  border: 1px solid #98add9;
}

.front-task {
  background-color: #94a3cb;
  border-color: #fff;
}

.adobe {
  width: 37px;
  height: 36px;
  border: 2px solid;
  font-size: 20px;
  font-weight: 600;
  line-height: 31px;
}

.bridge {
  background-color: #231a0c;
  color: #e8a22c;
}

.photoshop {
  background-color: #0d1a2c;
  color: #45b4dc;
}

.torrent {
  width: 40px;
  height: 40px;
  border-radius: 50%;
  background-color: #69b043;
  color: #fff;
  font-size: 40px;
  font-weight: 700;
  line-height: 32px;
}

.tray {
  display: flex;
  align-items: center;
  gap: 10px;
  margin-left: auto;
  padding-right: 20px;
  color: #fff;
}

.tray svg {
  fill: #fff;
}

.tray .line {
  stroke: #fff;
}

.tray .more {
  margin-right: 7px;
}

.lang {
  margin-left: 8px;
  font-size: 14px;
}

.clock {
  flex-direction: column;
  margin-left: 11px;
  font-size: 14px;
  line-height: 22px;
}

/* dialog */
.overlay {
  position: absolute;
  inset: 0;
  display: flex;
  justify-content: center;
  align-items: flex-start;
  padding-top: 235px;
}

.dialog {
  width: 478px;
  padding: 0 8px 8px;
  background-color: #5f82d0;
  border: 1px solid #4a6cbb;
  font-family: 'DejaVu Sans Condensed', 'DejaVu Sans', sans-serif;
  font-size: 12px;
  color: #111;
}

.dialog-title {
  position: relative;
  height: 36px;
}

.dialog h1 {
  margin: 0;
  color: #1c2c55;
  font-family: 'Open Sans', 'Noto Sans', sans-serif;
  font-size: 18px;
  font-weight: 400;
  line-height: 36px;
  text-align: center;
}

.dialog-close {
  position: absolute;
  top: 0;
  right: 0;
  width: 41px;
  height: 26px;
  background-color: #c75050;
}

.dialog-close .line {
  stroke: #fff;
}

.dialog-body {
  display: flex;
  gap: 11px;
  padding: 15px 11px 15px 12px;
  background-color: #dcdcdc;
}

.warning {
  margin-top: 2px;
}

.dialog-content {
  flex: 1;
  min-width: 0;
}

.dialog p {
  margin: 0 0 11px;
  line-height: 14px;
}

.dialog dl {
  display: grid;
  grid-template-columns: 78px 1fr;
  column-gap: 9px;
  margin: 0 0 11px;
  line-height: 23px;
}

.dialog dt {
  text-align: right;
}

.dialog dd {
  margin: 0;
}

.dialog fieldset {
  margin: 0;
  padding: 3px 8px 4px 9px;
  border: 1px solid #aaa;
  box-shadow: 1px 1px #f4f4f4;
}

.dialog legend {
  margin-left: 6px;
  padding: 0 5px;
}

.dialog label {
  display: flex;
  align-items: center;
  gap: 6px;
  height: 24px;
  white-space: nowrap;
}

.dialog input {
  appearance: none;
  width: 14px;
  height: 14px;
  border: 1px solid #777;
  border-radius: 50%;
  background-color: #fff;
}

.dialog input:checked {
  background: radial-gradient(#333 0 3px, #fff 4px);
}

.dialog-buttons {
  display: flex;
  align-items: center;
  justify-content: flex-end;
  gap: 16px;
  margin-top: 20px;
}

.dialog-buttons button {
  height: 20px;
  background: linear-gradient(#fff, #f0f0f0);
  border: 1px solid #888;
  border-radius: 2px;
}

.dialog-buttons .default {
  width: 45px;
  height: 22px;
  border-width: 2px;
}

.dialog-buttons .cancel {
  width: 77px;
  padding-left: 8px;
}
```
